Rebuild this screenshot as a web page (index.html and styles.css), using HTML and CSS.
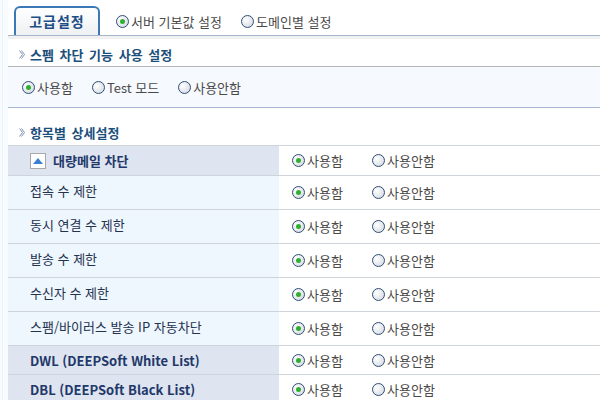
FILE: index.html
```html
<!DOCTYPE html>
<html lang="ko">
<head>
    <meta charset="UTF-8">
    <title>스팸 차단 설정</title>
    <link rel="stylesheet" href="styles.css">
</head>
<body>
    <div class="page">
        <!-- Tabs -->
        <div class="tabbar">
            <div class="tab">고급설정</div>
            <label class="opt tab-opt"><span class="radio on"></span>서버 기본값 설정</label>
            <label class="opt tab-opt"><span class="radio"></span>도메인별 설정</label>
        </div>
        <div class="band"></div>

        <!-- Spam block -->
        <h2 class="title title-first"><svg class="arrow" width="6" height="9" viewBox="0 0 6 9"><path d="M0.5 0.5 L3.5 4.5 L0.5 8.5 M2.5 0.5 L5.5 4.5 L2.5 8.5" fill="none" stroke="#7f90b0" stroke-width="1"/></svg>스펨 차단 기능 사용 설정</h2>
        <div class="mode-box">
            <label class="opt"><span class="radio on"></span>사용함</label>
            <label class="opt"><span class="radio"></span>Test 모드</label>
            <label class="opt"><span class="radio"></span>사용안함</label>
        </div>

        <!-- Detail -->
        <h2 class="title title-second"><svg class="arrow" width="6" height="9" viewBox="0 0 6 9"><path d="M0.5 0.5 L3.5 4.5 L0.5 8.5 M2.5 0.5 L5.5 4.5 L2.5 8.5" fill="none" stroke="#7f90b0" stroke-width="1"/></svg>항목별 상세설정</h2>
        <div class="grid">
            <div class="row row-head">
                <div class="name"><span class="toggle"><svg width="10" height="6" viewBox="0 0 10 6"><path d="M5 0 L10 6 L0 6 Z" fill="#3a7fd0"/></svg></span>대량메일 차단</div>
                <div class="choice">
                    <label class="opt"><span class="radio on"></span>사용함</label>
                    <label class="opt"><span class="radio"></span>사용안함</label>
                </div>
            </div>
            <div class="row">
                <div class="name">접속 수 제한</div>
                <div class="choice">
                    <label class="opt"><span class="radio on"></span>사용함</label>
                    <label class="opt"><span class="radio"></span>사용안함</label>
                </div>
            </div>
            <div class="row">
                <div class="name">동시 연결 수 제한</div>
                <div class="choice">
                    <label class="opt"><span class="radio on"></span>사용함</label>
                    <label class="opt"><span class="radio"></span>사용안함</label>
                </div>
            </div>
            <div class="row">
                <div class="name">발송 수 제한</div>
                <div class="choice">
                    <label class="opt"><span class="radio on"></span>사용함</label>
                    <label class="opt"><span class="radio"></span>사용안함</label>
                </div>
            </div>
            <div class="row">
                <div class="name">수신자 수 제한</div>
                <div class="choice">
                    <label class="opt"><span class="radio on"></span>사용함</label>
                    <label class="opt"><span class="radio"></span>사용안함</label>
                </div>
            </div>
            <div class="row">
                <div class="name">스팸/바이러스 발송 IP 자동차단</div>
                <div class="choice">
                    <label class="opt"><span class="radio on"></span>사용함</label>
                    <label class="opt"><span class="radio"></span>사용안함</label>
                </div>
            </div>
            <div class="row row-list">
                <div class="name">DWL (DEEPSoft White List)</div>
                <div class="choice">
                    <label class="opt"><span class="radio on"></span>사용함</label>
                    <label class="opt"><span class="radio"></span>사용안함</label>
                </div>
            </div>
            <div class="row row-list">
                <div class="name">DBL (DEEPSoft Black List)</div>
                <div class="choice">
                    <label class="opt"><span class="radio on"></span>사용함</label>
                    <label class="opt"><span class="radio"></span>사용안함</label>
                </div>
            </div>
        </div>
    </div>
</body>
</html>
```

FILE: styles.css
```css
body {
    margin: 0;
    font-family: "Noto Sans CJK KR", "Noto Sans", sans-serif;
    font-size: 13px;
    color: #4a4a4a;
    background: #fff;
}
.page {
    padding-left: 8px;
    background: linear-gradient(90deg, #f9fcfe 0, #f9fcfe 2px, #e8f3fa 2px, #e8f3fa 3px, #f9fcfe 3px, #f9fcfe 8px, #fff 8px);
    background-repeat: no-repeat;
    min-height: 400px;
}

/* tab bar */
.tabbar {
    display: flex;
    align-items: flex-end;
    height: 36px;
    padding-left: 6px;
    border-bottom: 1px solid #a3b5cc;
    box-sizing: border-box;
}
.tab {
    width: 82px;
    height: 27px;
    border: 2px solid #3b79b6;
    border-bottom: none;
    border-radius: 6px 6px 0 0;
    background: linear-gradient(#fff, #eef0f3);
    color: #1d4e86;
    font-weight: bold;
    font-size: 14px;
    text-align: center;
    line-height: 27px;
    letter-spacing: 1px;
    margin-right: 16px;
}
.tab-opt {
    height: 28px;
    margin-right: 19px;
}
.band {
    height: 3px;
    background: #f1f1f1;
}

/* option with radio */
.opt {
    display: inline-flex;
    align-items: center;
    gap: 2px;
    color: #4a4a4a;
    font-size: 13px;
    white-space: nowrap;
}
.radio {
    width: 11px;
    height: 11px;
    border: 1px solid #2f4f78;
    border-radius: 50%;
    background: radial-gradient(circle at 35% 35%, #ffffff, #cfd4dc);
    position: relative;
    flex: none;
}
.radio.on::after {
    content: "";
    position: absolute;
    left: 3px;
    top: 3px;
    width: 5px;
    height: 5px;
    border-radius: 50%;
    background: #2fae2f;
}

/* section titles */
.title {
    margin: 0;
    display: flex;
    align-items: center;
    gap: 5px;
    padding-left: 11px;
    font-size: 13px;
    font-weight: bold;
    color: #1b4f7c;
    word-spacing: 2px;
}
.title-first {
    height: 27px;
    box-sizing: border-box;
    padding-top: 3px;
}
.title-second {
    height: 37px;
    box-sizing: border-box;
    padding-top: 11px;
}
.mode-box {
    display: flex;
    align-items: center;
    height: 40px;
    padding-left: 14px;
    gap: 19px;
    background: #f6f9fe;
    border-top: 1px solid #b6b6b6;
    border-bottom: 1px solid #a9b7d4;
}

/* detail grid */
.grid {
    border-top: 1px solid #cfd4dc;
}
.row {
    display: grid;
    grid-template-columns: 271px 1fr;
    height: 34px;
    border-bottom: 1px solid #cfd4dc;
    box-sizing: border-box;
}
.name {
    background: #eef6fe;
    color: #24324e;
    padding: 5px 0 0 22px;
    box-sizing: border-box;
}
.choice {
    display: flex;
    align-items: center;
    padding-left: 13px;
}
.choice .opt:first-child {
    width: 80px;
}
.row-head {
    height: 30px;
}
.row-head .name,
.row-list .name {
    background: #dee5f0;
    font-weight: bold;
    color: #23386a;
    display: flex;
    align-items: center;
    padding-top: 0;
}
.row-list {
    height: 29px;
}
.toggle {
    display: inline-flex;
    align-items: center;
    justify-content: center;
    width: 14px;
    height: 14px;
    border: 1px solid #a8a8a8;
    background: #fff;
    margin-right: 7px;
}
```
